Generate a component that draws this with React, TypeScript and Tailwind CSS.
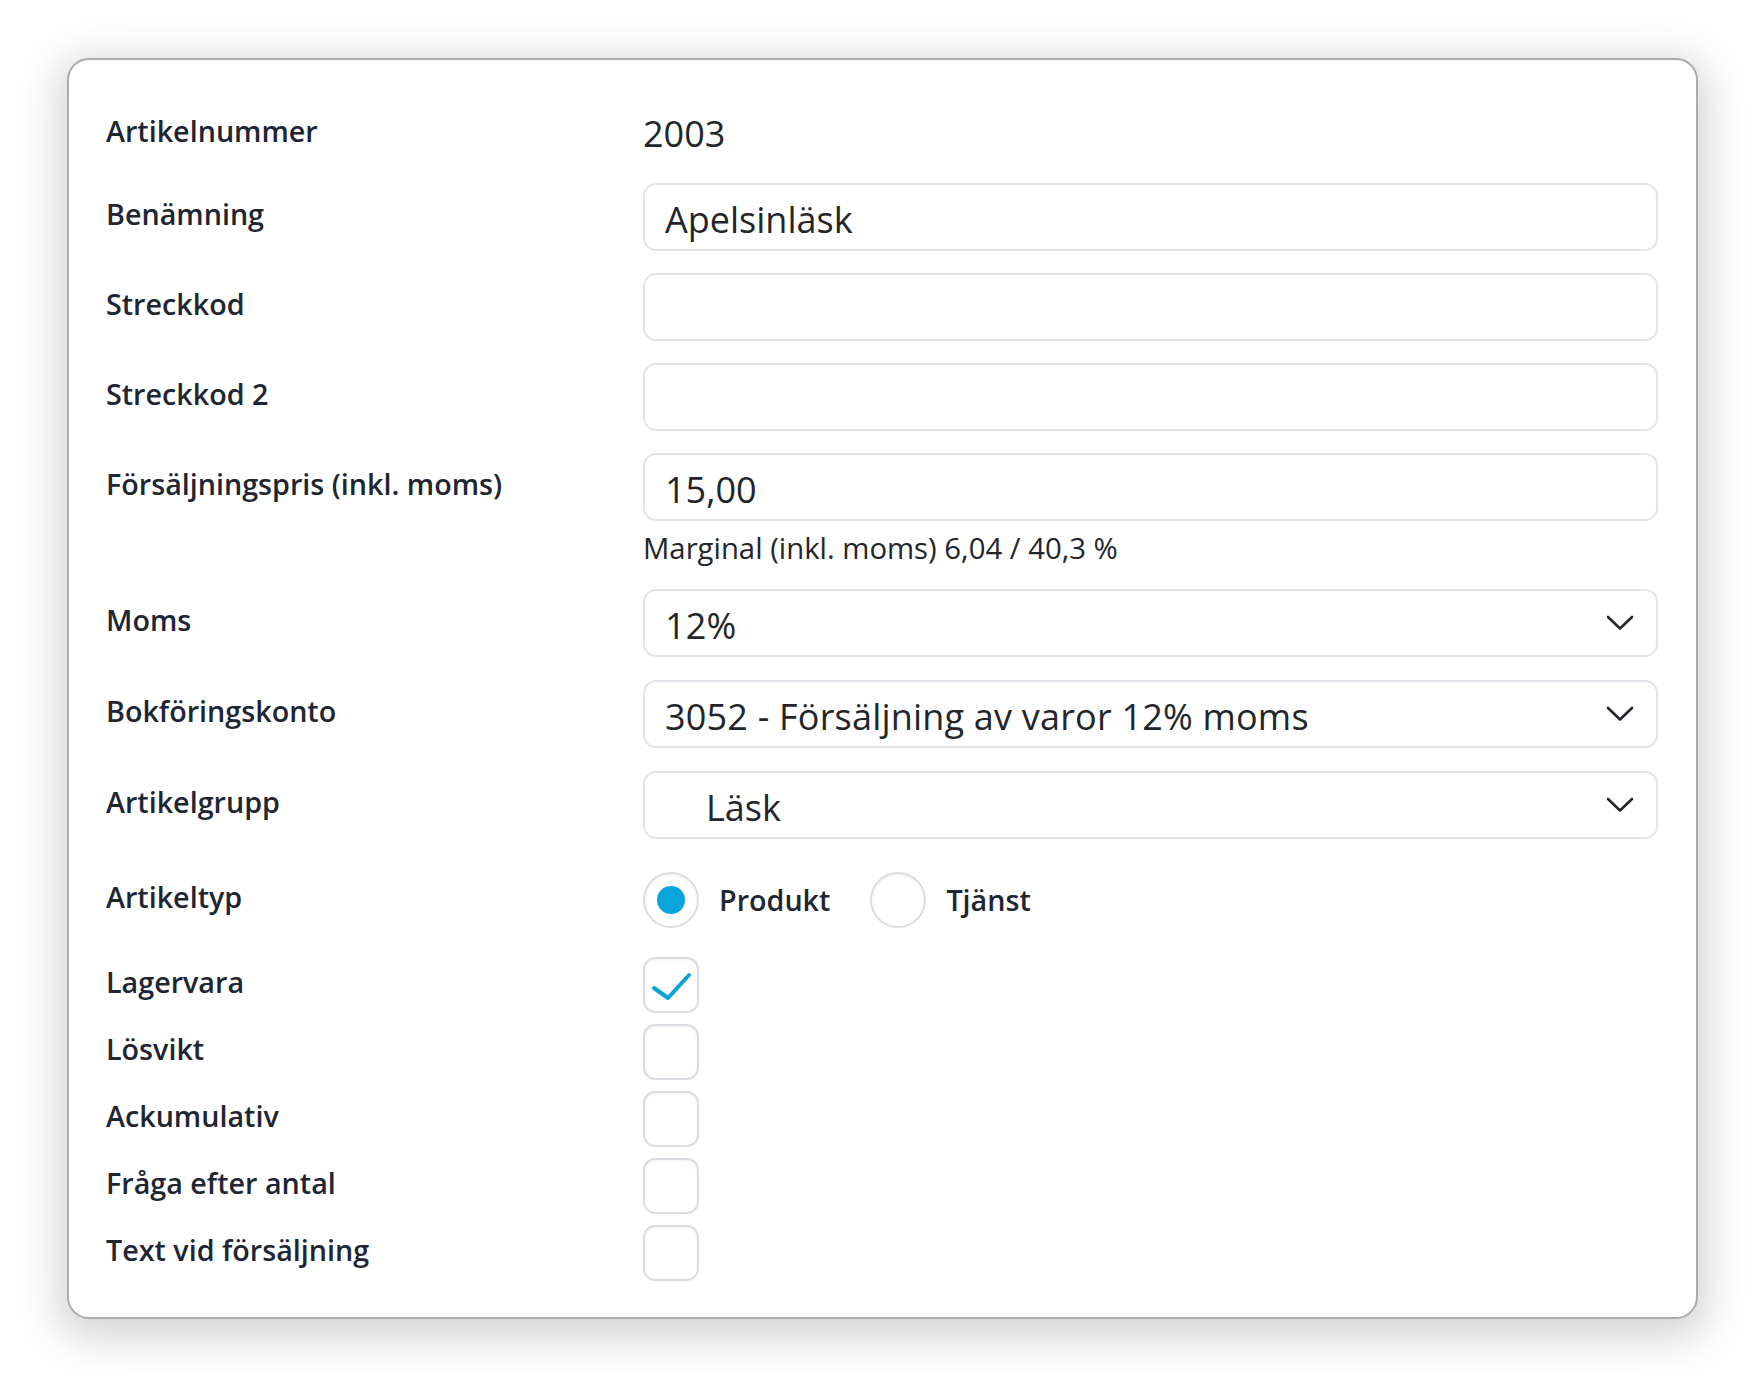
import React from "react";

function Label({ children }: { children: React.ReactNode }) {
  return (
    <div className="pb-[6px] text-[28.7px] font-semibold text-[#1e2633] leading-none">
      {children}
    </div>
  );
}

function TextField({ value }: { value?: string }) {
  return (
    <input
      readOnly
      defaultValue={value}
      className="h-[68px] w-full rounded-[13px] border-2 border-[#e1e5ea] bg-white px-[20px] pt-[5px] text-[36px] text-[#22262b] outline-none"
    />
  );
}

function Chevron() {
  return (
    <svg width="28" height="16" viewBox="0 0 28 16" fill="none">
      <path
        d="M2 2 L14 13.5 L26 2"
        stroke="#23272c"
        strokeWidth="2.6"
        strokeLinecap="round"
        strokeLinejoin="round"
      />
    </svg>
  );
}

function SelectField({ value, indent }: { value: string; indent?: boolean }) {
  return (
    <div className="h-[68px] w-full rounded-[13px] border-2 border-[#e1e5ea] bg-white pl-[20px] pr-[22px] flex items-center justify-between text-[36px] text-[#22262b]">
      <span className={indent ? "pl-[41px] pt-[5px]" : "pt-[5px] tracking-[0.2px]"}>{value}</span>
      <Chevron />
    </div>
  );
}

function Radio({ checked }: { checked?: boolean }) {
  return (
    <div className="h-[56px] w-[56px] rounded-full border-2 border-[#dadee3] bg-white shadow-[inset_0_1px_3px_rgba(0,0,0,0.06)] flex items-center justify-center">
      {checked && <div className="h-[28px] w-[28px] rounded-full bg-[#0aa4dc]" />}
    </div>
  );
}

function Checkbox({ checked }: { checked?: boolean }) {
  return (
    <div className="relative h-[56px] w-[56px] rounded-[12px] border-2 border-[#dadee3] bg-white shadow-[inset_0_1px_3px_rgba(0,0,0,0.06)]">
      {checked && (
        <svg className="absolute left-[-2px] top-[-2px]" width="56" height="56" viewBox="0 0 56 56" fill="none">
          <path
            d="M11 31 L25 41 L46 18"
            stroke="#0aa4dc"
            strokeWidth="4"
            strokeLinecap="round"
            strokeLinejoin="round"
          />
        </svg>
      )}
    </div>
  );
}

const row = "grid grid-cols-[537px_1015px] items-center";

export default function App() {
  return (
    <div className="min-h-screen bg-white pl-[67px] pt-[58px] font-['Open_Sans',sans-serif]">
      <div className="w-[1631px] h-[1261px] rounded-[22px] border-2 border-[#ababab] bg-white pl-[37px] pt-[47px] shadow-[0_10px_40px_10px_rgba(0,0,0,0.17)]">
        <div className={`${row} h-[48px]`}>
          <Label>Artikelnummer</Label>
          <div className="text-[36px] text-[#22262b]">2003</div>
        </div>

        <div className={`${row} mt-[28px]`}>
          <Label>Benämning</Label>
          <TextField value="Apelsinläsk" />
        </div>
        <div className={`${row} mt-[22px]`}>
          <Label>Streckkod</Label>
          <TextField />
        </div>
        <div className={`${row} mt-[22px]`}>
          <Label>Streckkod 2</Label>
          <TextField />
        </div>
        <div className={`${row} mt-[22px]`}>
          <Label>Försäljningspris (inkl. moms)</Label>
          <TextField value="15,00" />
        </div>
        <div className={`${row} mt-[12px] h-[32px]`}>
          <div />
          <div className="text-[29.3px] leading-none text-[#22262b]">Marginal (inkl. moms) 6,04 / 40,3 %</div>
        </div>

        <div className={`${row} mt-[24px]`}>
          <Label>Moms</Label>
          <SelectField value="12%" />
        </div>
        <div className={`${row} mt-[23px]`}>
          <Label>Bokföringskonto</Label>
          <SelectField value="3052 - Försäljning av varor 12% moms" />
        </div>
        <div className={`${row} mt-[23px]`}>
          <Label>Artikelgrupp</Label>
          <SelectField value="Läsk" indent />
        </div>

        <div className={`${row} mt-[33px]`}>
          <Label>Artikeltyp</Label>
          <div className="flex items-center">
            <Radio checked />
            <span className="ml-[20px] text-[28.7px] font-semibold text-[#1e2633]">Produkt</span>
            <div className="ml-[40px]">
              <Radio />
            </div>
            <span className="ml-[20px] text-[28.7px] font-semibold text-[#1e2633]">Tjänst</span>
          </div>
        </div>

        <div className={`${row} mt-[29px]`}>
          <Label>Lagervara</Label>
          <Checkbox checked />
        </div>
        <div className={`${row} mt-[11px]`}>
          <Label>Lösvikt</Label>
          <Checkbox />
        </div>
        <div className={`${row} mt-[11px]`}>
          <Label>Ackumulativ</Label>
          <Checkbox />
        </div>
        <div className={`${row} mt-[11px]`}>
          <Label>Fråga efter antal</Label>
          <Checkbox />
        </div>
        <div className={`${row} mt-[11px]`}>
          <Label>Text vid försäljning</Label>
          <Checkbox />
        </div>
      </div>
    </div>
  );
}
